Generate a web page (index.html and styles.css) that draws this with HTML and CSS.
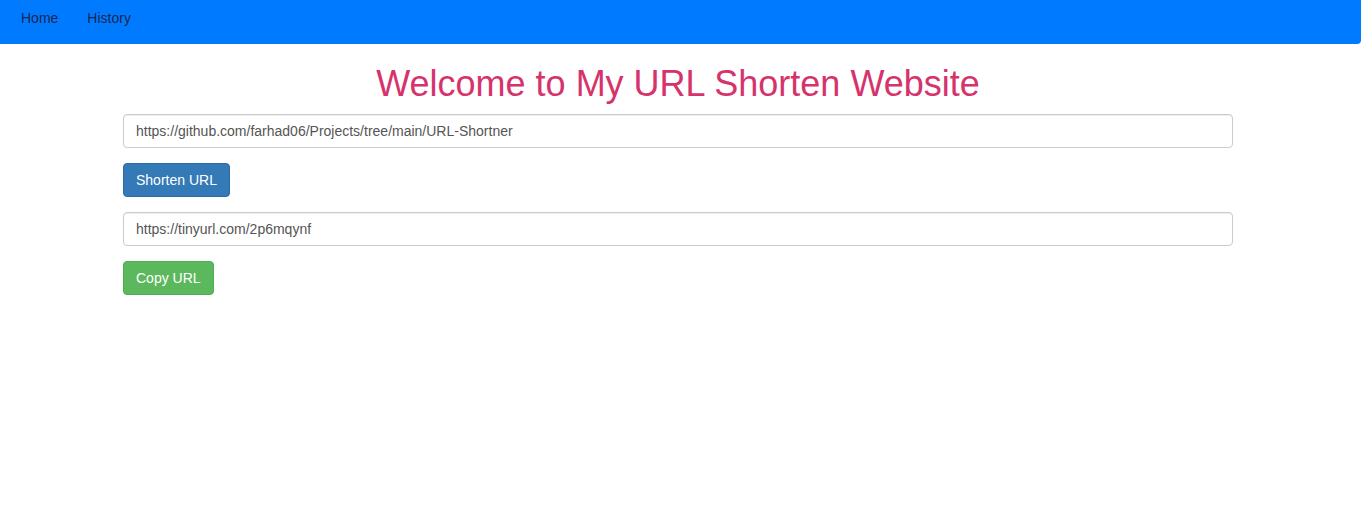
FILE: index.html
```html
<!DOCTYPE html>
<html>
<head>
<meta charset="utf-8">
<link rel="stylesheet" href="styles.css">
</head>
<body>
<nav class="navbar">
  <a class="nav-link" href="#">Home</a>
  <a class="nav-link" href="#">History</a>
</nav>
<main class="container">
  <h1 class="title">Welcome to My URL Shorten Website</h1>
  <div class="form-group">
    <input class="form-control" type="text" value="https://github.com/farhad06/Projects/tree/main/URL-Shortner">
  </div>
  <div class="form-group">
    <button class="btn btn-primary">Shorten URL</button>
  </div>
  <div class="form-group">
    <input class="form-control" type="text" value="https://tinyurl.com/2p6mqynf">
  </div>
  <div class="form-group">
    <button class="btn btn-success">Copy URL</button>
  </div>
</main>
</body>
</html>
```
FILE: styles.css
```css
* { box-sizing: border-box; }
html, body { margin: 0; padding: 0; background: #fff; }
body {
  font-family: "Liberation Sans", Arial, sans-serif;
  font-size: 14px;
  line-height: 1.42857;
  color: #333;
}
.navbar {
  height: 44px;
  background: #007bff;
  border-radius: 0 0 4px 0;
  display: flex;
  align-items: flex-start;
  padding: 8px 0 0 21px;
  gap: 29px;
}
.nav-link {
  color: #1b2650;
  text-decoration: none;
  font-size: 14px;
  line-height: 20px;
}
.container {
  width: 1110px;
  margin-left: 123px;
}
.title {
  font-family: "Liberation Sans", Arial, sans-serif;
  font-weight: 400;
  font-size: 36px;
  line-height: 1.1;
  color: #d6336c;
  text-align: center;
  margin: 20px 0 10px;
}
.form-group { margin-bottom: 15px; }
.form-control {
  display: block;
  width: 100%;
  height: 34px;
  padding: 6px 12px;
  font-family: "Liberation Sans", Arial, sans-serif;
  font-size: 14px;
  line-height: 1.42857;
  color: #555;
  background: #fff;
  border: 1px solid #ccc;
  border-radius: 4px;
  box-shadow: inset 0 1px 1px rgba(0,0,0,.075);
  outline: none;
}
.btn {
  display: inline-block;
  height: 34px;
  padding: 7px 12px 5px;
  font-family: "Liberation Sans", Arial, sans-serif;
  font-size: 14px;
  line-height: 1.42857;
  color: #fff;
  border: 1px solid transparent;
  border-radius: 4px;
  cursor: pointer;
}
.btn-primary { background: #337ab7; border-color: #2e6da4; }
.btn-success { background: #5cb85c; border-color: #4cae4c; }
```
